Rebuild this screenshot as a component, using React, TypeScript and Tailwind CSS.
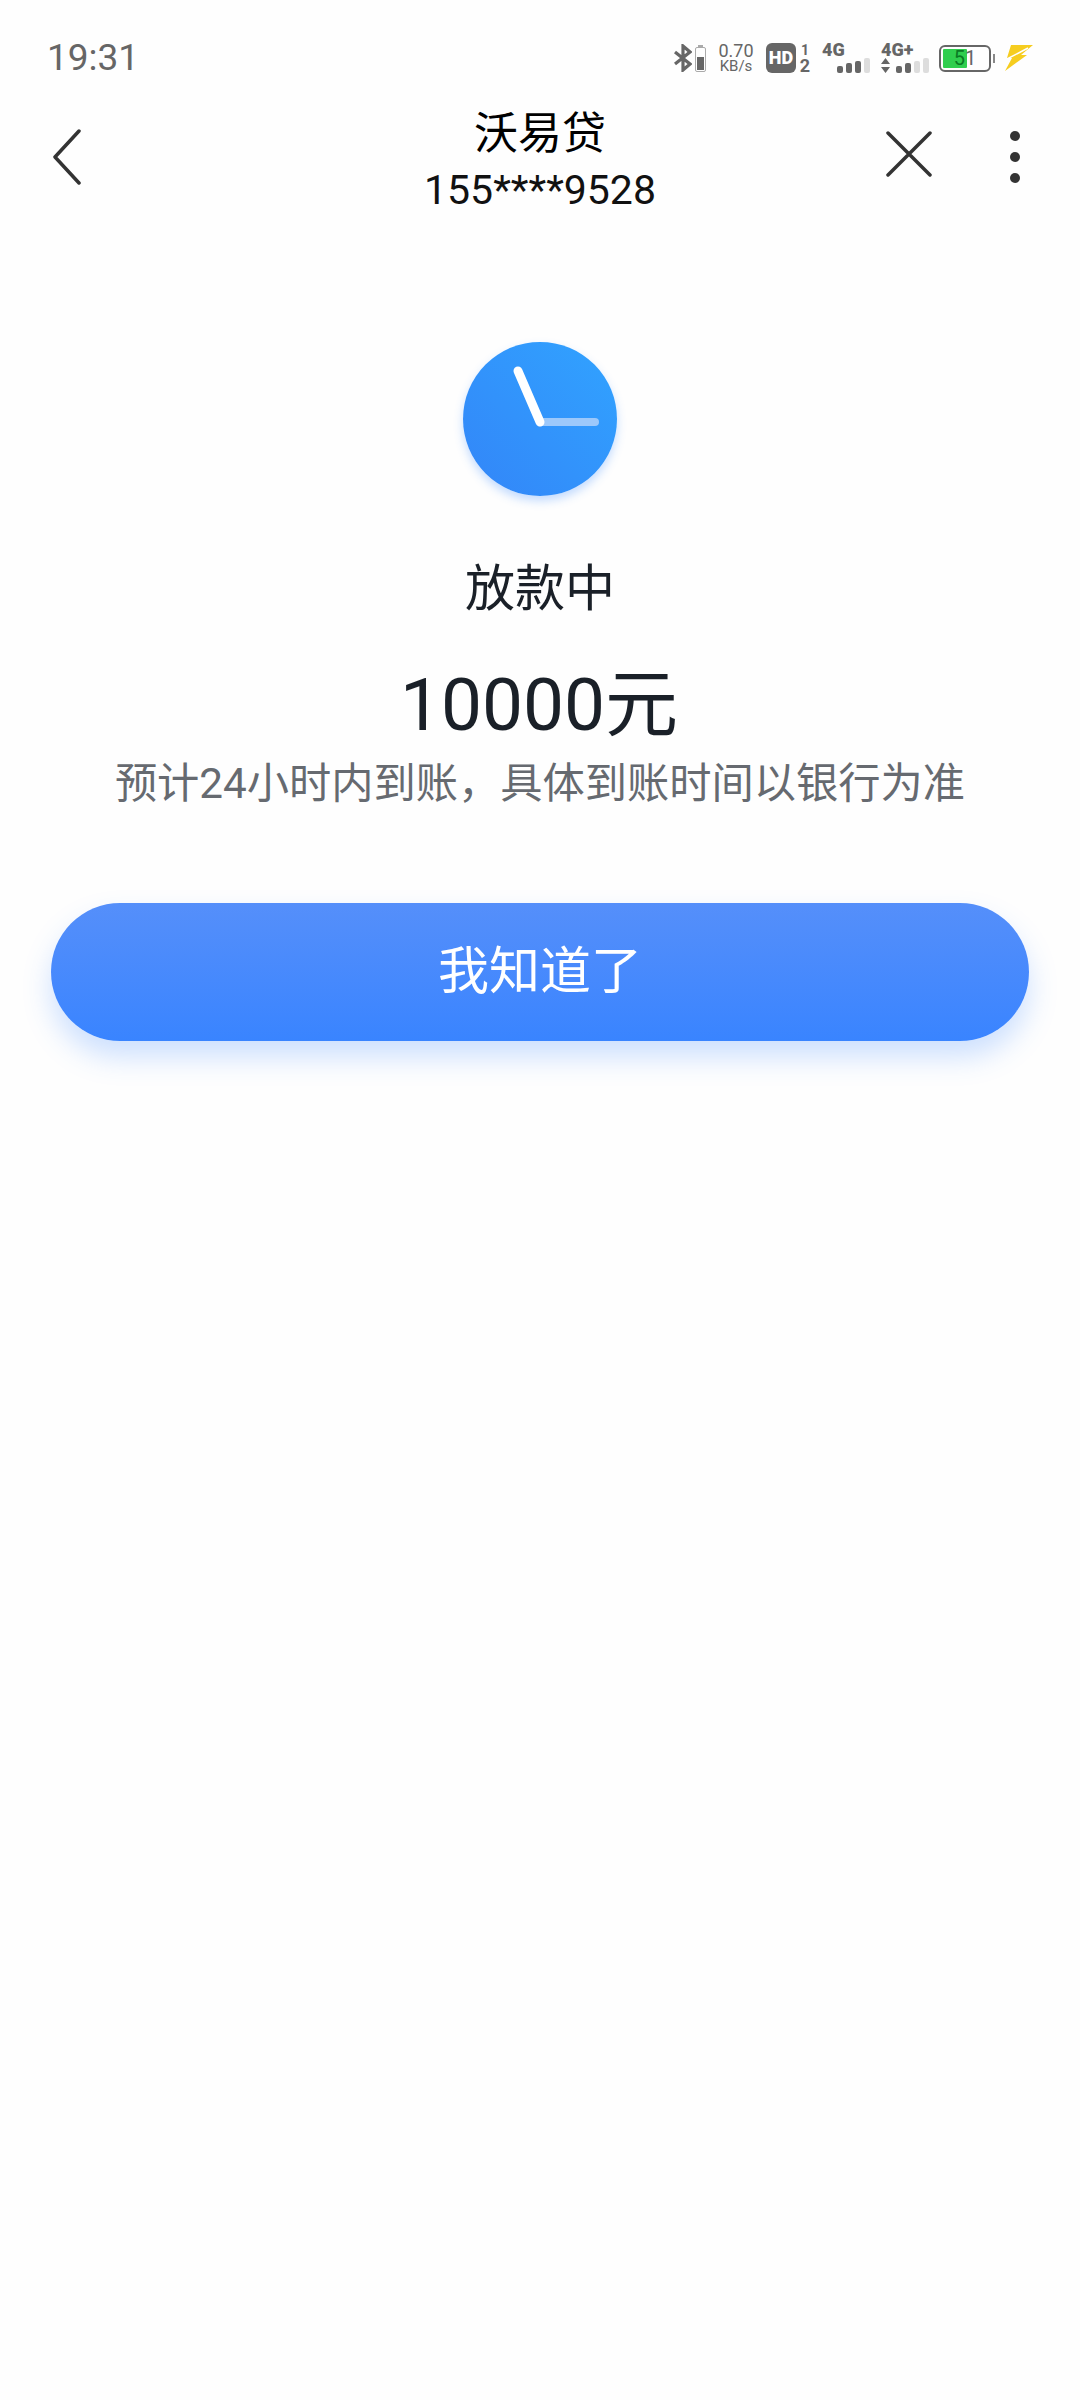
import React from "react";

const FONT = { fontFamily: '"Roboto", "Noto Sans CJK SC", sans-serif' };

function Bars({ on, total }: { on: number; total: number }) {
  return (
    <div className="flex items-end gap-[3px]">
      {Array.from({ length: total }).map((_, i) => (
        <div
          key={i}
          className="w-[6px] rounded-[2px]"
          style={{
            height: 7 + i * 2.6,
            background: i < on ? "#666" : "#ddd",
          }}
        />
      ))}
    </div>
  );
}

function StatusIcons() {
  return (
    <div className="flex items-center h-[30px] text-[#666]">
      <svg width="18" height="28" viewBox="0 0 18 28" fill="none" stroke="#666" strokeWidth="3.2">
        <path d="M1 8l15 12-7 6V2l7 6L1 20" />
      </svg>
      <div className="ml-[3px] relative w-[11px] h-[25px] mt-[2px] border border-[#aaa] rounded-[2px] flex items-end p-[1px]">
        <div className="w-full h-[13px] bg-[#666]" />
        <div className="absolute -top-[3px] left-[2px] w-[5px] h-[2px] bg-[#aaa]" />
      </div>
      <div className="ml-[11px] flex flex-col items-center w-[38px] text-[#666]">
        <span className="text-[18px] leading-[17px]">0.70</span>
        <span className="text-[15px] leading-[15px]">KB/s</span>
      </div>
      <div className="ml-[11px] w-[30px] h-[30px] rounded-[6px] bg-[#666] flex items-center justify-center text-white text-[18px] font-black leading-none">
        HD
      </div>
      <div className="ml-[3px] flex flex-col items-center w-[12px] text-[#666] font-bold">
        <span className="text-[14px] leading-[14px]">1</span>
        <span className="text-[18px] leading-[17px]">2</span>
      </div>
      <div className="ml-[11px] w-[48px] h-[30px] relative">
        <span className="absolute left-0 -top-[2px] text-[18px] leading-[18px] font-black text-[#666]">4G</span>
        <div className="absolute right-0 bottom-0">
          <Bars on={3} total={4} />
        </div>
      </div>
      <div className="ml-[11px] w-[48px] h-[30px] relative">
        <span className="absolute left-0 -top-[2px] text-[18px] leading-[18px] font-black text-[#666]">4G+</span>
        <svg className="absolute left-0 bottom-0" width="9" height="15" viewBox="0 0 9 15" fill="#666">
          <path d="M4.5 0L9 6H0zM0 9h9l-4.500 6z" />
        </svg>
        <div className="absolute right-0 bottom-0">
          <Bars on={2} total={4} />
        </div>
      </div>
      <div className="ml-[10px] w-[52px] h-[27px] border-[2px] border-[#666] rounded-[6px] p-[2px] relative flex">
        <div className="w-[24px] h-full bg-[#2fce4e] rounded-[1px]" />
        <span className="absolute inset-0 flex items-center justify-center text-[20px] leading-none text-[#0a7a24]">
          5<span className="text-[#666]">1</span>
        </span>
      </div>
      <div className="w-[2px] h-[9px] bg-[#888] ml-[2px]" />
      <svg className="ml-[9px]" width="30" height="26" viewBox="0 0 30 26" fill="#f6cd1f">
        <path d="M7 0h22L17 10h6L1 26l7-13H3z" />
        <path d="M3 14L24 3" stroke="#fff" strokeWidth="1.500" />
      </svg>
    </div>
  );
}

function Clock() {
  return (
    <div className="w-[154px] h-[154px] rounded-full bg-gradient-to-tr from-[#3385f8] to-[#31a3ff] shadow-[0_5px_10px_rgba(60,140,255,0.3)] relative">
      <svg className="absolute inset-0" width="154" height="154" viewBox="0 0 154 154" fill="none" strokeLinecap="round">
        <path d="M78 80h54" stroke="#9cc8fb" strokeWidth="8" />
        <path d="M55 29l22 51" stroke="#fff" strokeWidth="9" />
      </svg>
    </div>
  );
}

export default function App() {
  return (
    <div className="w-[1080px] h-[2400px] bg-[#fefefe] flex flex-col overflow-hidden" style={FONT}>
      <div className="flex items-center justify-between h-[30px] mt-[43px] pl-[47px] pr-[46px]">
        <span className="text-[37px] leading-[30px] text-[#666]">19:31</span>
        <StatusIcons />
      </div>

      <div className="grid grid-cols-[1fr_auto_1fr] items-start mt-[33px] pl-[52px] pr-[60px]">
        <svg className="mt-[23px]" width="30" height="56" viewBox="0 0 30 56" fill="none" stroke="#333" strokeWidth="3.500" strokeLinecap="round" strokeLinejoin="round">
          <path d="M27 2L3 28l24 26" />
        </svg>
        <div className="flex flex-col items-center text-black ml-[8px]">
          <span className="text-[44px] leading-[56px]">沃易贷</span>
          <span className="text-[41px] leading-[50px] mt-[3px] text-[#111]">155****9528</span>
        </div>
        <div className="flex items-start justify-end mt-[25px]">
          <svg width="46" height="46" viewBox="0 0 46 46" fill="none" stroke="#333" strokeWidth="3.500" strokeLinecap="round">
            <path d="M2 2l42 42M44 2L2 44" />
          </svg>
          <div className="ml-[78px] flex flex-col gap-[11px]">
            <div className="w-[10px] h-[10px] rounded-full bg-[#333]" />
            <div className="w-[10px] h-[10px] rounded-full bg-[#333]" />
            <div className="w-[10px] h-[10px] rounded-full bg-[#333]" />
          </div>
        </div>
      </div>

      <div className="flex flex-col items-center mt-[127px]">
        <Clock />
        <span className="mt-[63px] text-[50px] leading-[60px] text-[#1a2028]">放款中</span>
        <span className="mt-[43px] text-[73px] leading-[86px] text-[#1a2028] ml-[-2px]">10000元</span>
        <span className="mt-[8px] text-[42.25px] leading-[56px] text-[#666a70]">预计24小时内到账，具体到账时间以银行为准</span>
      </div>

      <div className="mx-[51px] mt-[91px] h-[138px] rounded-full bg-gradient-to-b from-[#558ffa] to-[#3984ff] shadow-[0_16px_28px_rgba(60,135,255,0.25)] flex items-center justify-center text-white text-[51px]">
        我知道了
      </div>
    </div>
  );
}
